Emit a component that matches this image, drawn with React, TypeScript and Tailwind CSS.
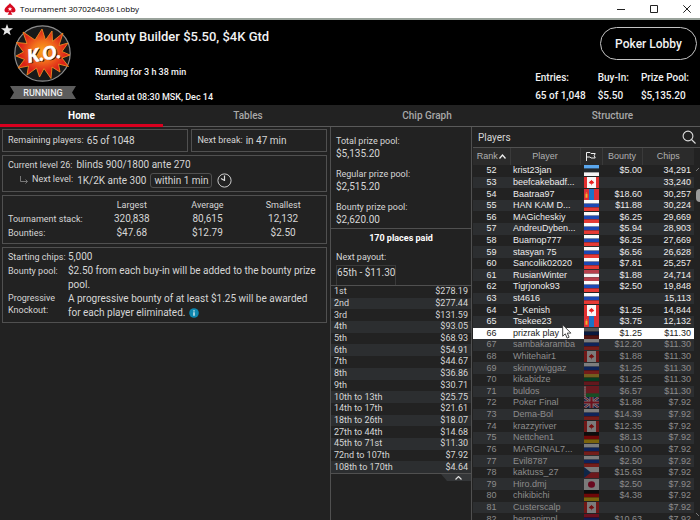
import clsx from "clsx";
import type { ReactNode } from "react";

type FlagCode = "ee" | "ca" | "mn" | "ru" | "lv" | "lt" | "by" | "gb" | "de" | "cz" | "jp" | "am";

interface Player {
  rank: number;
  name: string;
  flag: FlagCode;
  bounty: string;
  chips: string;
}

const HERO_RANK = 66;

const PLAYERS: Player[] = [
  { rank: 52, name: "krist23jan", flag: "ee", bounty: "$5.00", chips: "34,291" },
  { rank: 53, name: "beefcakebadf...", flag: "ca", bounty: "", chips: "33,240" },
  { rank: 54, name: "Baatraa97", flag: "mn", bounty: "$18.60", chips: "30,257" },
  { rank: 55, name: "HAN KAM D...", flag: "ru", bounty: "$11.88", chips: "30,224" },
  { rank: 56, name: "MAGicheskiy", flag: "ru", bounty: "$6.25", chips: "29,669" },
  { rank: 57, name: "AndreuDyben...", flag: "ru", bounty: "$5.94", chips: "28,903" },
  { rank: 58, name: "Buamop777", flag: "ru", bounty: "$6.25", chips: "27,669" },
  { rank: 59, name: "stasyan 75", flag: "ru", bounty: "$6.56", chips: "26,628" },
  { rank: 60, name: "Sancolik02020", flag: "ru", bounty: "$7.81", chips: "25,257" },
  { rank: 61, name: "RusianWinter", flag: "lv", bounty: "$1.88", chips: "24,714" },
  { rank: 62, name: "Tigrjonok93", flag: "ru", bounty: "$2.50", chips: "19,848" },
  { rank: 63, name: "st4616", flag: "ru", bounty: "", chips: "15,113" },
  { rank: 64, name: "J_Kenish", flag: "ca", bounty: "$1.25", chips: "14,844" },
  { rank: 65, name: "Tsekee23", flag: "mn", bounty: "$3.75", chips: "12,132" },
  { rank: 66, name: "prizrak play", flag: "ru", bounty: "$1.25", chips: "$11.30" },
  { rank: 67, name: "sambakaramba", flag: "ru", bounty: "$12.20", chips: "$11.30" },
  { rank: 68, name: "Whitehair1", flag: "ca", bounty: "$1.88", chips: "$11.30" },
  { rank: 69, name: "skinnywiggaz", flag: "ru", bounty: "$1.25", chips: "$11.30" },
  { rank: 70, name: "kikabidze", flag: "lt", bounty: "$1.25", chips: "$11.30" },
  { rank: 71, name: "buldos", flag: "by", bounty: "$6.57", chips: "$11.30" },
  { rank: 72, name: "Poker Final", flag: "gb", bounty: "$1.88", chips: "$7.92" },
  { rank: 73, name: "Dema-Bol", flag: "ru", bounty: "$14.39", chips: "$7.92" },
  { rank: 74, name: "krazzyriver", flag: "ca", bounty: "$12.35", chips: "$7.92" },
  { rank: 75, name: "Nettchen1", flag: "de", bounty: "$8.13", chips: "$7.92" },
  { rank: 76, name: "MARGINAL7...", flag: "ru", bounty: "$10.00", chips: "$7.92" },
  { rank: 77, name: "Evil8787", flag: "ru", bounty: "$2.50", chips: "$7.92" },
  { rank: 78, name: "kaktuss_27", flag: "cz", bounty: "$15.63", chips: "$7.92" },
  { rank: 79, name: "Hiro.dmj", flag: "jp", bounty: "$2.50", chips: "$7.92" },
  { rank: 80, name: "chikibichi", flag: "de", bounty: "$4.38", chips: "$7.92" },
  { rank: 81, name: "Custerscalp", flag: "ca", bounty: "", chips: "$7.92" },
  { rank: 82, name: "hernanimpl", flag: "am", bounty: "$10.63", chips: "$7.92" },
];

const PAYOUTS: [string, string][] = [
  ["1st", "$278.19"],
  ["2nd", "$277.44"],
  ["3rd", "$131.59"],
  ["4th", "$93.05"],
  ["5th", "$68.93"],
  ["6th", "$54.91"],
  ["7th", "$44.67"],
  ["8th", "$36.86"],
  ["9th", "$30.71"],
  ["10th to 13th", "$25.75"],
  ["14th to 17th", "$21.61"],
  ["18th to 26th", "$18.07"],
  ["27th to 44th", "$14.68"],
  ["45th to 71st", "$11.30"],
  ["72nd to 107th", "$7.92"],
  ["108th to 170th", "$4.64"],
];

const PRIZE_POOLS: [string, string][] = [
  ["Total prize pool:", "$5,135.20"],
  ["Regular prize pool:", "$2,515.20"],
  ["Bounty prize pool:", "$2,620.00"],
];

const SUMMARY: [string, string][] = [
  ["Entries:", "65 of 1,048"],
  ["Buy-In:", "$5.50"],
  ["Prize Pool:", "$5,135.20"],
];

const TABS = ["Home", "Tables", "Chip Graph", "Structure"];

// Horizontal tricolours, top to bottom.
const STRIPES: Partial<Record<FlagCode, [string, string, string]>> = {
  ee: ["#5aa7ee", "#23282c", "#f4f4f4"],
  ru: ["#fafafa", "#1c48b4", "#e63a35"],
  lv: ["#b8404c", "#f4f4f4", "#b8404c"],
  lt: ["#e8b93c", "#0a7a44", "#c4303a"],
  de: ["#1a1a1a", "#dd1010", "#f5c71a"],
  am: ["#d8203c", "#2238a8", "#f0a020"],
};

function FlagArt({ code }: { code: FlagCode }) {
  const stripes = STRIPES[code];

  if (stripes) {
    return (
      <>
        {stripes.map((fill, index) => (
          <rect key={index} fill={fill} height="4" width="15" y={index * 4} />
        ))}
      </>
    );
  }

  switch (code) {
    case "ca":
      return (
        <>
          <rect fill="#f8f8f8" height="12" width="15" />
          <path d="M0 0h3v12H0zM12 0h3v12h-3z" fill="#e03030" />
          <path
            d="M7.500 3l.8 1.300 1-.2-.2 1 1.200.9-1.400 1.400-1.100-.1V9h-.6V7.300l-1.100.1L4.700 6l1.200-.9-.2-1 1 .2z"
            fill="#e82020"
          />
        </>
      );
    case "mn":
      return (
        <>
          <rect fill="#dd3038" height="12" width="15" />
          <path d="M5 0h5v12H5z" fill="#1a74c8" />
          <path d="M1.500 5.500h2v4h-2zM2.500 3.500l1 1.500h-2z" fill="#f0b429" />
        </>
      );
    case "by":
      return (
        <>
          <rect fill="#d23440" height="12" width="15" />
          <path d="M0 8h15v4H0z" fill="#2f9a48" />
          <path d="M0 0h2v12H0z" fill="#e8c8c8" />
          <path d="M1 0v12" stroke="#d23440" strokeDasharray="1 1" />
        </>
      );
    case "gb":
      return (
        <>
          <rect fill="#26348c" height="12" width="15" />
          <path d="M0 0l15 12M15 0L0 12" stroke="#f4f4f4" strokeWidth="2.600" />
          <path d="M0 0l15 12M15 0L0 12" stroke="#d82038" strokeWidth="1" />
          <path d="M7.500 0v12M0 6h15" stroke="#f4f4f4" strokeWidth="4" />
          <path d="M7.500 0v12M0 6h15" stroke="#d82038" strokeWidth="2.200" />
        </>
      );
    case "cz":
      return (
        <>
          <rect fill="#f4f4f4" height="6" width="15" />
          <rect fill="#d83038" height="6" width="15" y="6" />
          <path d="M0 0l7 6-7 6z" fill="#1c4c90" />
        </>
      );
    default:
      return (
        <>
          <rect fill="#f4f4f4" height="12" width="15" />
          <circle cx="7.500" cy="6" fill="#d0103c" r="3.500" />
        </>
      );
  }
}

function Flag({ code, className }: { code: FlagCode; className?: string }) {
  return (
    <div className="mx-auto h-[11px] w-[15px] bg-black">
      <svg
        aria-hidden="true"
        className={clsx("block h-full w-full", className)}
        preserveAspectRatio="none"
        viewBox="0 0 15 12"
      >
        <FlagArt code={code} />
      </svg>
    </div>
  );
}

function Box({ className, children }: { className?: string; children: ReactNode }) {
  return <section className={clsx("border border-[#505050] px-[5px]", className)}>{children}</section>;
}

function TitleBar() {
  return (
    <div className="flex h-5 shrink-0 items-center border-b-2 border-[#9aa39c] bg-white pl-1 font-['Open_Sans',sans-serif] text-[8px] text-black">
      <svg aria-hidden="true" className="mr-1 h-3 w-3" viewBox="0 0 12 12">
        <path
          d="M6 0C7.500 2.500 11.500 4.300 11.500 7.200c0 2-2.600 3-4.400 1.600.1 1.200.5 2 1.300 3H3.600c.8-1 1.200-1.800 1.300-3C3.100 10.200.5 9.200.5 7.200.5 4.300 4.500 2.500 6 0z"
          fill="#d70a20"
        />
        <path d="M6 3.800l.6 1.500 1.600.1-1.200 1 .4 1.600L6 7.100 4.600 8 5 6.400l-1.200-1 1.600-.1z" fill="#fff" />
      </svg>
      <h1 className="flex-1 leading-4">Tournament 3070264036 Lobby</h1>
      <div className="flex gap-[17px] pr-[5px]">
        <button aria-label="Minimize" className="flex h-4 w-4 items-center justify-center" type="button">
          <svg className="h-2 w-2" viewBox="0 0 8 8">
            <path d="M0 4.500h8" stroke="#222" />
          </svg>
        </button>
        <button aria-label="Maximize" className="flex h-4 w-4 items-center justify-center" type="button">
          <svg className="h-2 w-2" viewBox="0 0 8 8">
            <path d="M.5.500h7v7h-7z" fill="none" stroke="#222" />
          </svg>
        </button>
        <button aria-label="Close" className="flex h-4 w-4 items-center justify-center" type="button">
          <svg className="h-2 w-2" viewBox="0 0 8 8">
            <path d="M.3.300l7.400 7.400M7.700.300L.3 7.700" stroke="#222" />
          </svg>
        </button>
      </div>
    </div>
  );
}

function KnockoutBadge() {
  return (
    <div className="relative flex w-[95px] shrink-0 flex-col pl-2.5 pt-[5px]">
      <svg aria-hidden="true" className="absolute left-px top-1 h-3 w-3" viewBox="0 0 14 14">
        <path d="M7 0l1.800 4.900 5.200.2-4.100 3.200L11.300 13 7 10.200 2.700 13l1.400-4.700L0 5.100l5.200-.2z" fill="#e6e6e6" />
      </svg>
      <svg aria-hidden="true" className="ml-1 h-[57px] w-[57px]" viewBox="0 0 57 57">
        <defs>
          <radialGradient cx="0.500" cy="0.450" id="burst">
            <stop offset="0" stopColor="#fba41c" />
            <stop offset="0.400" stopColor="#f2701c" />
            <stop offset="0.850" stopColor="#dc2218" />
          </radialGradient>
        </defs>
        <circle cx="28.500" cy="28.500" fill="#191919" r="27.700" stroke="#8c8c8c" strokeWidth="1.200" />
        <path
          d="M28 4l3.500 11L38 6l.5 10.500L49 8l-4 12.500 9-2.500-6 8.500 8 3.500-8 3 6.500 8.500-10-2.500 1.500 8-8-5-1 11.500-7-10-4.500 8.500-3-9L13 50l1.500-9L4 43l6.500-8.500L2 31l7.500-4L2.500 17.500l10.500 1L9 7l12 8z"
          fill="url(#burst)"
          stroke="#ef8a20"
          strokeLinejoin="miter"
          strokeWidth="0.900"
        />
        <g
          className="font-['Lato',sans-serif]"
          fontSize="18"
          fontStyle="italic"
          fontWeight="900"
          textAnchor="middle"
          transform="rotate(-9 28 30)"
        >
          <text fill="#2a0a0a" x="31" y="36.500">
            K.O.
          </text>
          <text fill="#fff" stroke="#fff" strokeWidth="0.600" x="30" y="35.500">
            K.O.
          </text>
        </g>
      </svg>
      <div className="mt-1 flex h-[13px] w-[66px] items-center justify-center bg-[#5c5c5c] text-[9px] font-medium leading-3 text-[#eee] [clip-path:polygon(0_0,100%_0,94%_50%,100%_100%,0_100%,6%_50%)]">
        RUNNING
      </div>
    </div>
  );
}

function Header() {
  return (
    <header className="flex h-[85px] shrink-0 bg-black text-[#f2f2f2]">
      <KnockoutBadge />
      <div className="flex flex-1 flex-col pt-2">
        <h2 className="text-[13px] font-medium leading-[18px]">Bounty Builder $5.50, $4K Gtd</h2>
        <p className="mt-5 text-[9px] font-medium leading-3">Running for 3 h 38 min</p>
        <p className="mt-[13px] text-[9px] font-medium leading-3">Started at 08:30 MSK, Dec 14</p>
      </div>
      <div className="flex flex-col items-end pt-[7px]">
        <button
          className="mr-[3px] h-[33px] w-[97px] rounded-full border border-[#c4c4c4] text-[12px] font-medium"
          type="button"
        >
          Poker Lobby
        </button>
        <dl className="mr-[11px] mt-[9px] flex gap-3 text-[10px] font-medium leading-[18px]">
          {SUMMARY.map(([label, value]) => (
            <div key={label}>
              <dt>{label}</dt>
              <dd>{value}</dd>
            </div>
          ))}
        </dl>
      </div>
    </header>
  );
}

function TabStrip() {
  return (
    <nav className="grid h-[22px] shrink-0 grid-cols-[163fr_170fr_188fr_179fr] bg-[#222]">
      {TABS.map((tab, index) => (
        <button
          key={tab}
          className={clsx(
            "text-[10px] leading-4 last:pl-1",
            index === 0
              ? "border-b-3 border-[#d9001f] pt-[3px] font-bold text-white"
              : "border-b border-[#5a5a5a] pt-px font-medium text-[#a8a8a8]",
          )}
          type="button"
        >
          {tab}
        </button>
      ))}
    </nav>
  );
}

function HomePane() {
  return (
    <div className="flex flex-col gap-[3px] px-[2px] pr-[3px] pt-[2px] text-[10px] text-[#d6d6d6]">
      <div className="grid grid-cols-[187fr_136fr] gap-[3px]">
        <Box className="flex h-[23px] items-center gap-[3px]">
          <span className="text-[9px]">Remaining players:</span>65 of 1048
        </Box>
        <Box className="flex h-[23px] items-center gap-[3px]">
          <span className="text-[9px]">Next break:</span>in 47 min
        </Box>
      </div>

      <Box className="pb-[3px] pt-[2px]">
        <div className="flex items-center gap-1 leading-[14px]">
          <span className="text-[9px]">Current level 26:</span>blinds 900/1800 ante 270
        </div>
        <div className="flex h-4 items-center gap-1 pl-3">
          <svg aria-hidden="true" className="h-2 w-2" viewBox="0 0 8 8">
            <path d="M.5 0v5.500h7M5.500 3.500l2 2-2 2" fill="none" stroke="#777" />
          </svg>
          <span className="text-[9px]">Next level:</span>
          1K/2K ante 300
          <span className="rounded-[3px] border border-[#505050] px-[3px] leading-[13px]">within 1 min</span>
          <svg aria-hidden="true" className="ml-[1px] h-[15px] w-[15px]" viewBox="0 0 15 15">
            <circle cx="7.500" cy="7.500" fill="none" r="6.600" stroke="#ccc" />
            <path d="M7.500 2.500v5.500M7.500 7.500L4 5.500" fill="none" stroke="#ddd" strokeWidth="1.200" />
          </svg>
        </div>
      </Box>

      <Box className="pb-[3px] pt-[2px]">
        <table className="w-full table-fixed text-center leading-[14px]">
          <thead className="text-[9px]">
            <tr>
              <th aria-label="Statistic" className="w-[86px]" />
              <th className="font-normal">Largest</th>
              <th className="font-normal">Average</th>
              <th className="font-normal">Smallest</th>
            </tr>
          </thead>
          <tbody>
            <tr>
              <th className="text-left text-[9px] font-normal">Tournament stack:</th>
              <td>320,838</td>
              <td>80,615</td>
              <td>12,132</td>
            </tr>
            <tr>
              <th className="text-left text-[9px] font-normal">Bounties:</th>
              <td>$47.68</td>
              <td>$12.79</td>
              <td>$2.50</td>
            </tr>
          </tbody>
        </table>
      </Box>

      <Box className="pb-0.5 pt-[2px]">
        <dl className="grid grid-cols-[60px_1fr] leading-[14px]">
          <dt className="text-[9px]">Starting chips:</dt>
          <dd>5,000</dd>
          <dt className="text-[9px]">Bounty pool:</dt>
          <dd>$2.50 from each buy-in will be added to the bounty prize pool.</dd>
          <dt className="text-[9px] leading-3">Progressive Knockout:</dt>
          <dd>
            A progressive bounty of at least $1.25 will be awarded for each player eliminated.
            <button aria-label="About progressive knockout" className="ml-1 inline-block align-middle" type="button">
              <svg className="block h-[10px] w-[10px]" viewBox="0 0 10 10">
                <circle cx="5" cy="5" fill="#0f86ae" r="4.800" />
                <path d="M5 4.200v3.500M5 2.200v1.200" stroke="#fff" strokeWidth="1.200" />
              </svg>
            </button>
          </dd>
        </dl>
      </Box>
    </div>
  );
}

function PrizePane() {
  return (
    <div className="border-x border-[#505050] text-[#d6d6d6]">
      <dl className="px-[5px] pb-px pt-2">
        {PRIZE_POOLS.map(([label, value]) => (
          <div key={label} className="mb-[7px] last:mb-0">
            <dt className="text-[9px] leading-3">{label}</dt>
            <dd className="text-[10px] leading-[14px]">{value}</dd>
          </div>
        ))}
      </dl>

      <div className="border-t border-[#505050] pt-px">
        <h3 className="text-center text-[9px] font-bold leading-4 text-white">170 places paid</h3>
        <div className="px-[5px] pt-[5px]">
          <p className="text-[9px] leading-3">Next payout:</p>
          <p className="mt-0.5 h-5 w-fit border border-b-0 border-[#3a3a3a] text-[10px] leading-[14px]">
            65th - $11.30
          </p>
        </div>
      </div>

      <div className="border-y border-[#505050]">
        <table className="h-[187px] w-full text-[9px] leading-[11px]">
          <tbody>
            {PAYOUTS.map(([place, prize]) => (
              <tr key={place} className="even:bg-[#2c2e30]">
                <td className="p-0 pl-[3px]">{place}</td>
                <td className="p-0 pr-[3px] text-right">{prize}</td>
              </tr>
            ))}
          </tbody>
        </table>
      </div>

      <button
        aria-label="Collapse payouts"
        className="ml-auto flex h-[7px] w-[30px] items-center justify-center bg-[#343638] pl-1 [clip-path:polygon(0_0,100%_0,100%_100%,20%_100%)]"
        type="button"
      >
        <svg className="h-[4px] w-[7px]" viewBox="0 0 7 4">
          <path d="M.5 3.500l3-3 3 3" fill="none" stroke="#ddd" strokeWidth="1.200" />
        </svg>
      </button>
    </div>
  );
}

function Pointer() {
  return (
    <svg aria-hidden="true" className="absolute left-[52px] top-[-4px] z-10 h-[15px] w-[10px]" viewBox="0 0 10 15">
      <path
        d="M.7.800v11.400l2.600-2.400 1.800 4.300 2-.9-1.800-4.100h3.600z"
        fill="#fff"
        stroke="#333"
        strokeWidth="0.900"
      />
    </svg>
  );
}

function PlayersPane() {
  return (
    <div className="flex min-h-0 flex-col pl-px font-['Liberation_Sans',Arial,sans-serif]">
      <div className="flex h-[21px] shrink-0 items-center justify-between border-b border-[#505050] pl-[5px] pr-1 font-['Roboto',sans-serif] text-[10px] text-[#d6d6d6]">
        <h3>Players</h3>
        <button aria-label="Find player" type="button">
          <svg className="h-[14px] w-[14px]" viewBox="0 0 14 14">
            <circle cx="6" cy="6" fill="none" r="4.900" stroke="#ddd" strokeWidth="1.100" />
            <path d="M9.500 9.500l4 4" stroke="#ddd" strokeWidth="1.100" />
          </svg>
        </button>
      </div>

      <div className="flex min-h-0 flex-1">
        <div className="min-h-0 flex-1 overflow-hidden">
          <table className="h-[377px] w-full table-fixed text-[9px] leading-[11px] text-[#ececec]">
            <thead>
              <tr className="h-[17px] bg-[#2b2b2b] text-[9px] text-[#b0b0b0] *:p-0 *:font-normal">
                <th className="w-[37px]">
                  <button className="inline-flex items-center" type="button">
                    Rank
                    <svg aria-hidden="true" className="ml-px h-[5px] w-[7px]" viewBox="0 0 7 5">
                      <path d="M.5 4.500l3-3.500 3 3.500" fill="none" stroke="#eee" strokeWidth="1.300" />
                    </svg>
                  </button>
                </th>
                <th className="border-l border-[#3a3a3a]">Player</th>
                <th aria-label="Country" className="w-[22px] border-l border-[#3a3a3a]">
                  <svg aria-hidden="true" className="mx-auto h-[9px] w-[10px]" viewBox="0 0 10 9">
                    <path d="M.5 9V.500h3.500l1 1h4.200l-1 2 1 2.500H5L4 5H.5" fill="none" stroke="#eee" />
                  </svg>
                </th>
                <th className="w-[40px] border-l border-[#3a3a3a]">Bounty</th>
                <th className="w-[52px] border-l border-[#3a3a3a]">Chips</th>
              </tr>
            </thead>
            <tbody>
              {PLAYERS.map((player) => {
                const isHero = player.rank === HERO_RANK;
                const isOut = player.rank > HERO_RANK;

                return (
                  <tr
                    key={player.rank}
                    className={clsx(
                      "*:p-0",
                      isHero ? "bg-white text-[#222]" : "even:bg-[#2c2e30]",
                      isOut && "text-[#8c8c8c]",
                    )}
                  >
                    <td className="text-center">{player.rank}</td>
                    <td className="whitespace-nowrap">
                      <div className="relative pl-[3px]">
                        {player.name}
                        {isHero ? <Pointer /> : null}
                      </div>
                    </td>
                    <td>
                      <Flag
                        className={clsx(isHero && "opacity-35", isOut && "opacity-50")}
                        code={player.flag}
                      />
                    </td>
                    <td className="text-right">{player.bounty}</td>
                    <td>
                      <div className="pr-[3px] text-right">{player.chips}</div>
                    </td>
                  </tr>
                );
              })}
            </tbody>
          </table>
        </div>

        <div className="flex w-[6px] shrink-0 flex-col items-end pb-1 pt-[20px]">
          <svg aria-hidden="true" className="h-[3px] w-1" viewBox="0 0 4 3">
            <path d="M0 3l3-3" fill="none" stroke="#777" />
          </svg>
          <div className="mt-[18px] h-[13px] w-1 rounded-l-sm bg-[#9a9a9a]" />
          <svg aria-hidden="true" className="mt-auto h-[3px] w-1" viewBox="0 0 4 3">
            <path d="M0 0l3 3" fill="none" stroke="#777" />
          </svg>
        </div>
      </div>
    </div>
  );
}

export default function App() {
  return (
    <div className="flex h-screen flex-col overflow-hidden bg-[#222] font-['Roboto',sans-serif]">
      <TitleBar />
      <Header />
      <TabStrip />
      <main className="grid min-h-0 flex-1 grid-cols-[330fr_142fr_228fr] grid-rows-[minmax(0,1fr)]">
        <HomePane />
        <PrizePane />
        <PlayersPane />
      </main>
    </div>
  );
}
